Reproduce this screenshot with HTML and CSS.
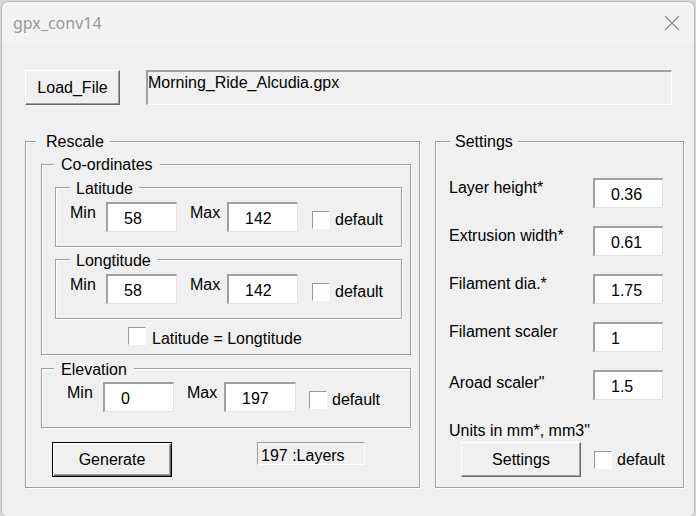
FILE: index.html
```html
<!DOCTYPE html>
<html lang="en">
<head>
    <meta charset="UTF-8">
    <meta name="viewport" content="width=device-width, initial-scale=1.0">
    <title>gpx_conv14</title>
    <link rel="stylesheet" href="styles.css">
</head>
<body>
    <div class="window">
        <div class="titlebar">
            <span class="title">gpx_conv14</span>
            <svg class="close" width="16" height="16" viewBox="0 0 16 16">
                <path d="M1 1 L15 15 M15 1 L1 15" stroke="#8c8c8c" stroke-width="1.2" fill="none"/>
            </svg>
        </div>

        <div class="form">
            <div class="file-row">
                <button class="btn">Load_File</button>
                <div class="file-box">Morning_Ride_Alcudia.gpx</div>
            </div>

            <div class="main-row">
                <!-- left: rescale -->
                <div class="frame rescale">
                    <span class="frame-title title-rescale">Rescale</span>

                    <div class="frame coords">
                        <span class="frame-title title-coords">Co-ordinates</span>

                        <div class="frame axis">
                            <span class="frame-title title-axis">Latitude</span>
                            <div class="field-row">
                                <span class="lbl">Min</span>
                                <input class="num" type="text" value="58">
                                <span class="lbl lbl-max">Max</span>
                                <input class="num" type="text" value="142">
                                <label class="check-wrap">
                                    <input class="check" type="checkbox">default
                                </label>
                            </div>
                        </div>

                        <div class="frame axis axis-next">
                            <span class="frame-title title-axis">Longtitude</span>
                            <div class="field-row">
                                <span class="lbl">Min</span>
                                <input class="num" type="text" value="58">
                                <span class="lbl lbl-max">Max</span>
                                <input class="num" type="text" value="142">
                                <label class="check-wrap">
                                    <input class="check" type="checkbox">default
                                </label>
                            </div>
                        </div>

                        <label class="link-row">
                            <input class="check" type="checkbox"><span class="link-text">Latitude = Longtitude</span>
                        </label>
                    </div>

                    <div class="frame elevation">
                        <span class="frame-title title-coords title-elev">Elevation</span>
                        <div class="field-row">
                            <span class="lbl">Min</span>
                            <input class="num" type="text" value="0">
                            <span class="lbl lbl-max">Max</span>
                            <input class="num num-wide" type="text" value="197">
                            <label class="check-wrap check-elev">
                                <input class="check" type="checkbox">default
                            </label>
                        </div>
                    </div>

                    <div class="rescale-foot">
                        <button class="btn btn-big btn-default">Generate</button>
                        <div class="layers">197 :Layers</div>
                    </div>
                </div>

                <!-- right: settings -->
                <div class="frame settings">
                    <span class="frame-title title-settings">Settings</span>

                    <div class="set-row">
                        <span class="set-lbl">Layer height*</span>
                        <input class="num num-set" type="text" value="0.36">
                    </div>
                    <div class="set-row">
                        <span class="set-lbl">Extrusion width*</span>
                        <input class="num num-set" type="text" value="0.61">
                    </div>
                    <div class="set-row">
                        <span class="set-lbl">Filament dia.*</span>
                        <input class="num num-set" type="text" value="1.75">
                    </div>
                    <div class="set-row">
                        <span class="set-lbl">Filament scaler</span>
                        <input class="num num-set" type="text" value="1">
                    </div>
                    <div class="set-row">
                        <span class="set-lbl set-lbl-low">Aroad scaler"</span>
                        <input class="num num-set" type="text" value="1.5">
                    </div>

                    <p class="units">Units in mm*, mm3"</p>

                    <div class="set-foot">
                        <button class="btn btn-big">Settings</button>
                        <label class="check-wrap check-set">
                            <input class="check" type="checkbox">default
                        </label>
                    </div>
                </div>
            </div>
        </div>
    </div>
</body>
</html>
```

FILE: styles.css
```css
html, body {
    margin: 0;
    padding: 0;
    height: 100%;
    overflow: hidden;
}

body {
    background-color: #d6d6d6;
    font-family: "Liberation Sans", Arial, sans-serif;
    font-size: 16px;
    color: #000;
}

.window {
    margin: 1px 0 0 1px;
    width: 694px;
    height: 517px;
    box-sizing: border-box;
    border: 1px solid #b9b9b9;
    border-radius: 8px;
    background-color: #f0f0f0;
    overflow: hidden;
}

.titlebar {
    height: 42px;
    background-color: #f3f3f3;
    display: flex;
    align-items: center;
    justify-content: space-between;
    padding: 0 14px 0 11px;
}

.title {
    font-family: "Noto Sans", sans-serif;
    font-size: 16px;
    color: #999;
}

.close {
    display: block;
}

.form {
    padding: 26px 0 0 23px;
}

/* top row */
.file-row {
    display: flex;
    align-items: flex-start;
}

.btn {
    font: inherit;
    color: #000;
    width: 95px;
    height: 35px;
    padding: 0;
    box-sizing: border-box;
    background-color: #f0f0f0;
    border: 1px solid;
    border-color: #fff #696969 #696969 #fff;
    box-shadow: inset -1px -1px 0 #a0a0a0;
}

.btn-big {
    width: 120px;
}

.btn-default {
    border-color: #000;
    box-shadow: inset 1px 1px 0 #fff, inset -1px -1px 0 #696969, inset -2px -2px 0 #a0a0a0;
}

.file-box {
    margin-left: 26px;
    width: 526px;
    height: 35px;
    box-sizing: border-box;
    border-style: solid;
    border-width: 2px 1px 1px 2px;
    border-color: #a0a0a0 #fff #fff #a0a0a0;
    padding-top: 2px;
    line-height: 18px;
}

/* frames */
.main-row {
    display: flex;
    gap: 15px;
    margin-top: 36px;
}

.frame {
    position: relative;
    box-sizing: border-box;
    border: 1px solid #a0a0a0;
    box-shadow: inset 1px 1px 0 #fff, 1px 1px 0 #fff;
}

.frame-title {
    position: absolute;
    top: -9px;
    padding: 0 6px;
    line-height: 18px;
    background-color: #f0f0f0;
}

.title-rescale {
    left: 10px;
    padding-left: 10px;
}

.title-coords {
    left: 12px;
    padding: 0 7px;
}

.title-elev {
    top: -8px;
}

.title-axis {
    left: 14px;
    top: -8px;
}

.title-settings {
    left: 14px;
    padding: 0 5px;
}

.rescale {
    width: 395px;
    height: 347px;
    padding: 22px 0 0 15px;
}

.coords {
    width: 370px;
    height: 191px;
    padding: 22px 0 0 13px;
}

.axis {
    width: 347px;
    height: 60px;
    padding: 14px 0 0 14px;
}

.axis-next {
    margin-top: 12px;
}

.elevation {
    margin-top: 13px;
    width: 370px;
    height: 60px;
    padding: 13px 0 0 25px;
}

/* min / max rows */
.field-row {
    display: flex;
    align-items: flex-start;
}

.lbl {
    width: 36px;
    margin-top: 2px;
    line-height: 18px;
}

.lbl-max {
    width: 37px;
    margin-left: 13px;
}

.num {
    font: inherit;
    color: #000;
    width: 71px;
    height: 30px;
    box-sizing: border-box;
    margin: 0;
    padding: 2px 0 0 16px;
    background-color: #fff;
    border-style: solid;
    border-width: 2px 1px 1px 2px;
    border-color: #a0a0a0 #e3e3e3 #e3e3e3 #a0a0a0;
    outline: none;
}

.num-wide {
    width: 72px;
}

.num-set {
    width: 70px;
}

.check-wrap {
    display: flex;
    align-items: center;
    gap: 5px;
    margin: 8px 0 0 14px;
    line-height: 18px;
    padding-top: 1px;
}

.check-elev {
    margin-left: 13px;
}

.check {
    appearance: none;
    margin: 0;
    width: 18px;
    height: 18px;
    box-sizing: border-box;
    background-color: #fff;
    border: 1px solid;
    border-color: #999 #fff #fff #999;
}

.link-row {
    display: flex;
    align-items: flex-start;
    gap: 6px;
    margin: 8px 0 0 73px;
    line-height: 18px;
}

.link-text {
    padding-top: 3px;
}

.rescale-foot {
    display: flex;
    align-items: flex-start;
    margin: 14px 0 0 11px;
}

.layers {
    margin-left: 85px;
    width: 108px;
    height: 23px;
    box-sizing: border-box;
    border: 1px solid;
    border-color: #a0a0a0 #fff #fff #a0a0a0;
    padding: 3px 0 0 3px;
    line-height: 19px;
}

/* settings */
.settings {
    width: 249px;
    height: 347px;
    padding: 36px 0 0 13px;
}

.set-row {
    display: flex;
    align-items: flex-start;
    height: 30px;
    margin-bottom: 18px;
}

.set-lbl {
    width: 144px;
    margin-top: 1px;
    line-height: 18px;
}

.set-lbl-low {
    margin-top: 4px;
}

.units {
    margin: 22px 0 0 0;
    line-height: 18px;
}

.set-foot {
    display: flex;
    align-items: flex-start;
    margin: 2px 0 0 12px;
}

.check-set {
    margin-left: 13px;
}
```
